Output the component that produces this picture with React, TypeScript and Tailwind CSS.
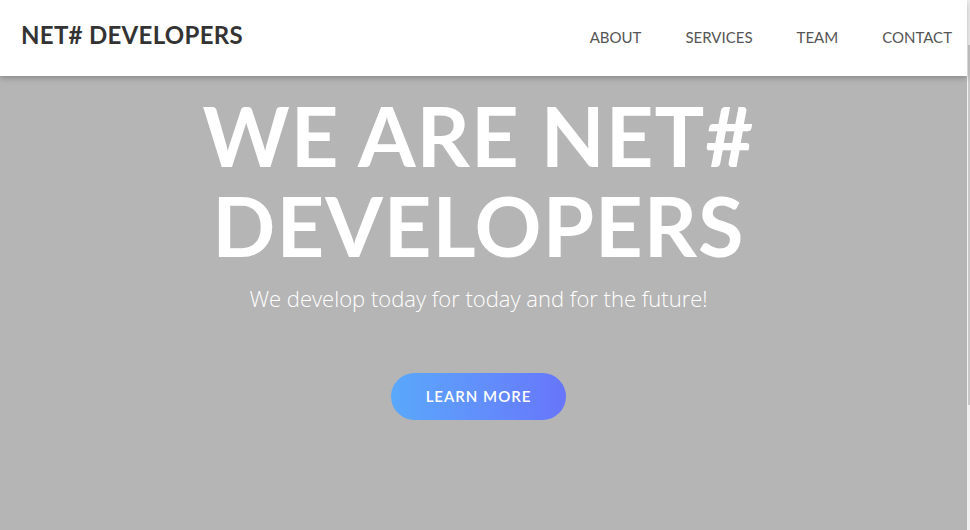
const links = ['ABOUT', 'SERVICES', 'TEAM', 'CONTACT'];

export default function App() {
  return (
    <div className="flex h-[530px] w-[970px] overflow-hidden bg-[#b5b5b5]">
      <div className="relative flex h-full flex-1 flex-col">
        <header className="relative z-10 flex h-[76px] items-center justify-between bg-white pb-[2px] pl-[21px] pr-[15px] shadow-[0_2px_6px_rgba(0,0,0,0.25)]">
          <div className="mb-[4px] text-[24px] font-bold tracking-[0.3px] text-[#333] [font-family:Lato,sans-serif]">NET# DEVELOPERS</div>
          <nav className="flex gap-[44px]">
            {links.map(link => (
              <a key={link} href="#" className="text-[15px] text-[#555] [font-family:Lato,sans-serif]">
                {link}
              </a>
            ))}
          </nav>
        </header>

        <section className="flex flex-1 flex-col items-center pr-[10px] pt-[14px] text-center">
          <h1 className="text-[83px] font-bold leading-[90px] tracking-[1px] text-white [font-family:Lato,sans-serif]">
            WE ARE NET#
            <br />
            DEVELOPERS
          </h1>
          <p className="mt-[12px] text-[22px] font-light text-white [font-family:'Open_Sans',sans-serif]">
            We develop today for today and for the future!
          </p>
          <button className="mt-[58px] h-[47px] w-[175px] rounded-full bg-gradient-to-r from-[#59a8fb] to-[#6775fb] text-[15px] font-semibold tracking-[1px] text-white [font-family:Lato,sans-serif]">
            LEARN MORE
          </button>
        </section>
      </div>
      <div className="relative w-[3px] bg-[#f1f1f1]">
        <div className="absolute left-[1px] top-[45px] h-[360px] w-[2px] bg-[#c8c8c8]" />
      </div>
    </div>
  );
}
